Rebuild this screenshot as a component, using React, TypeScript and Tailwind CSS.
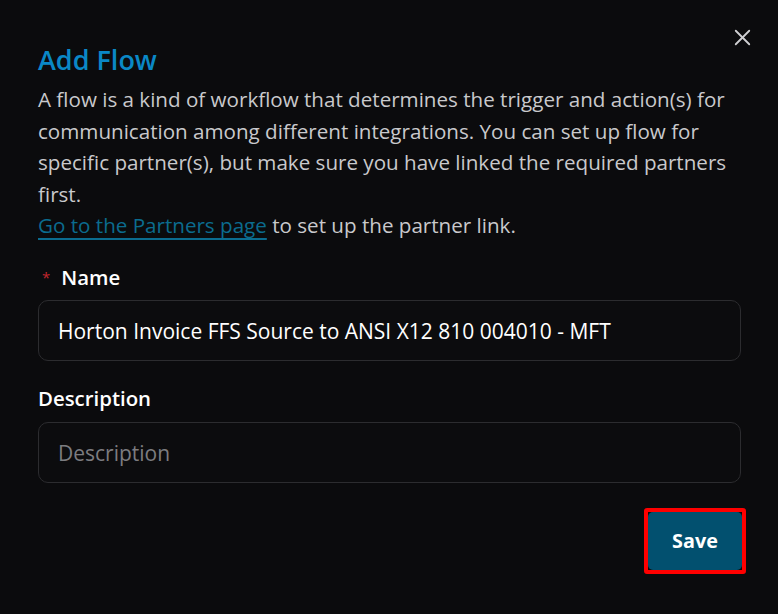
import { X } from "lucide-react";

export default function App() {
  return (
    <div
      className="min-h-[614px] w-full bg-[#0b0b0d] text-[#c9c9cc] relative"
      style={{ fontFamily: '"Open Sans", "Noto Sans", sans-serif' }}
    >
      {/* Close */}
      <button className="absolute right-[22px] top-[24px] text-[#cfcfd2]">
        <X className="w-[27px] h-[27px]" strokeWidth={1.6} />
      </button>

      <div className="pl-[38px] pr-[37px] pt-[42px]">
        <h2 className="text-[27px] font-semibold leading-[36px] text-[#0a88c6]">Add Flow</h2>
        <p className="text-[20.6px] leading-[31.5px] mt-[6px]">
          A flow is a kind of workflow that determines the trigger and action(s) for communication
          among different integrations. You can set up flow for specific partner(s), but make sure
          you have linked the required partners first.
          <br />
          <a href="#" className="text-[#0b6c8f] underline underline-offset-[5px] decoration-[2px]">
            Go to the Partners page
          </a>{" "}
          to set up the partner link.
        </p>

        <form className="mt-[21px]">
          <label className="flex items-center gap-[11px] text-[20.4px] font-semibold text-white leading-[28px]">
            <span className="ml-[4px] text-[#c4262e] text-[15px] font-normal">*</span>
            Name
          </label>
          <input
            defaultValue="Horton Invoice FFS Source to ANSI X12 810 004010 - MFT"
            className="mt-[9px] w-full h-[61px] rounded-[10px] border border-[#2c2c2f] bg-[#0c0c0e] px-[19px] pt-[2px] text-[21px] text-white outline-none"
          />

          <label className="block mt-[23px] text-[20.4px] font-semibold text-white leading-[28px]">
            Description
          </label>
          <input
            placeholder="Description"
            className="mt-[10px] w-full h-[61px] rounded-[10px] border border-[#2c2c2f] bg-[#0c0c0e] px-[19px] pt-[2px] text-[21px] text-white placeholder:text-[#7c7c80] outline-none"
          />

          <div className="flex justify-end mt-[25px]">
            <div className="mr-[-5px] border-[4px] border-[#ff0000] rounded-[3px]">
              <button
                type="button"
                className="block w-[94px] h-[58px] rounded-[5px] bg-[#02506f] text-white text-[19.8px] font-bold"
              >
                Save
              </button>
            </div>
          </div>
        </form>
      </div>
    </div>
  );
}
